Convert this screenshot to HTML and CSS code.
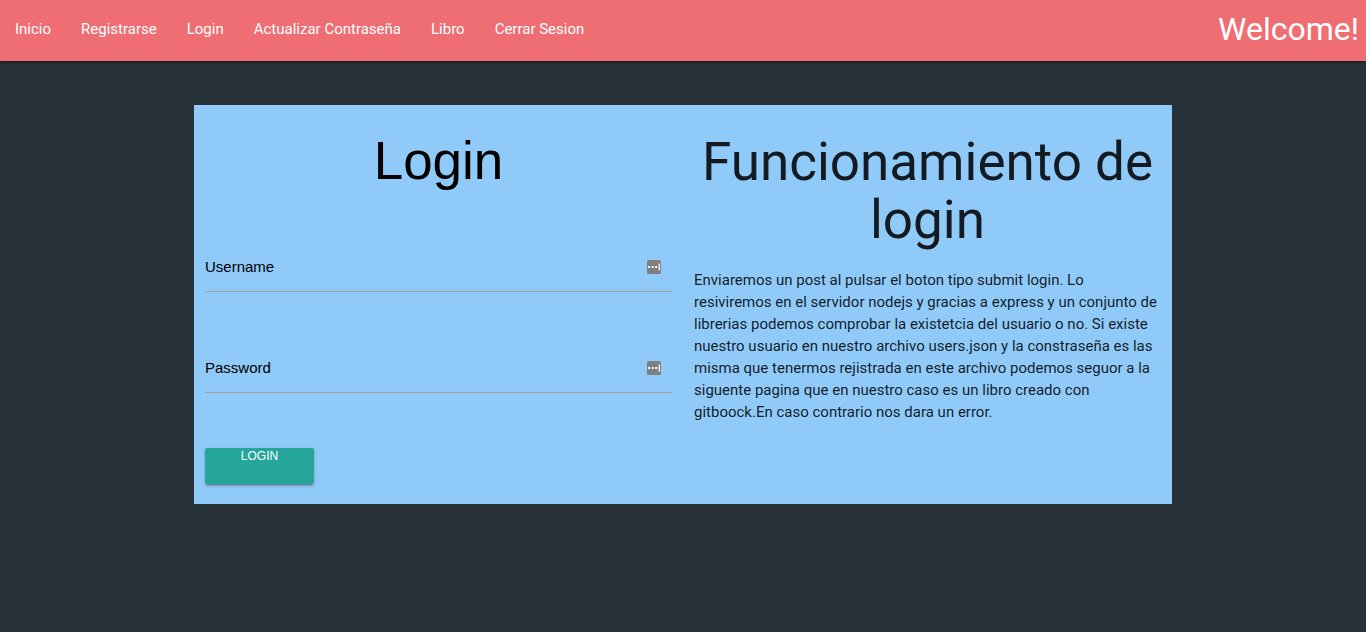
FILE: index.html
```html
<!DOCTYPE html>
<html lang="es">
<head>
<meta charset="utf-8">
<title>Login</title>
<link rel="stylesheet" href="styles.css">
</head>
<body>
<nav class="navbar">
  <ul class="nav-list">
    <li><a href="#">Inicio</a></li>
    <li><a href="#">Registrarse</a></li>
    <li><a href="#">Login</a></li>
    <li><a href="#">Actualizar Contraseña</a></li>
    <li><a href="#">Libro</a></li>
    <li><a href="#">Cerrar Sesion</a></li>
  </ul>
  <a class="brand" href="#">Welcome!</a>
</nav>
<main class="panel">
  <form class="login">
    <h2 class="title title-form">Login</h2>
    <div class="field">
      <input class="field-input" type="text" placeholder="Username" aria-label="Username">
      <svg class="field-icon" viewBox="0 0 14 14" aria-hidden="true"><rect width="14" height="14" rx="1.5" fill="#7f7f7f"/><path fill="#fff" d="M1.2 6.1h1.9v1.8H1.2zM4.7 6.1h1.9v1.8H4.7zM8.2 6.1h1.9v1.8H8.2zM11.6 3.5h1.3v7h-1.3z"/></svg>
    </div>
    <div class="field">
      <input class="field-input" type="password" placeholder="Password" aria-label="Password">
      <svg class="field-icon" viewBox="0 0 14 14" aria-hidden="true"><rect width="14" height="14" rx="1.5" fill="#7f7f7f"/><path fill="#fff" d="M1.2 6.1h1.9v1.8H1.2zM4.7 6.1h1.9v1.8H4.7zM8.2 6.1h1.9v1.8H8.2zM11.6 3.5h1.3v7h-1.3z"/></svg>
    </div>
    <button class="submit" type="button">Login</button>
  </form>
  <section class="info">
    <h2 class="title">Funcionamiento de login</h2>
    <p class="text">Enviaremos un post al pulsar el boton tipo submit login. Lo resiviremos en el servidor nodejs y gracias a express y un conjunto de librerias podemos comprobar la existetcia del usuario o no. Si existe nuestro usuario en nuestro archivo users.json y la constraseña es las misma que tenermos rejistrada en este archivo podemos seguor a la siguente pagina que en nuestro caso es un libro creado con gitboock.En caso contrario nos dara un error.</p>
  </section>
</main>
</body>
</html>
```

FILE: styles.css
```css
* { box-sizing: border-box; }
body {
  margin: 0;
  min-height: 100vh;
  background: #263238;
  color: rgba(0, 0, 0, 0.87);
  font: 15px/22px Roboto, sans-serif;
}
.navbar {
  display: flex;
  justify-content: space-between;
  align-items: center;
  height: 61px;
  padding-bottom: 3px;
  background: #ee6e73;
  box-shadow: 0 2px 2px rgba(0, 0, 0, 0.14), 0 1px 5px rgba(0, 0, 0, 0.12), 0 3px 1px -2px rgba(0, 0, 0, 0.2);
}
.nav-list {
  display: flex;
  margin: 0;
  padding: 0;
  list-style: none;
}
.nav-list a {
  display: block;
  padding: 0 15px;
  color: #fff;
  text-decoration: none;
}
.brand {
  padding-right: 7px;
  color: #fff;
  font-size: 32px;
  text-decoration: none;
}
.panel {
  display: grid;
  grid-template-columns: 1fr 1fr;
  width: 72%;
  max-width: 978px;
  margin: 44px auto 0;
  background: #90caf9;
}
.login, .info { padding: 0 11px; }
.title {
  margin: 28px 0 20px;
  font-size: 53px;
  line-height: 58px;
  font-weight: 400;
  text-align: center;
}
.title-form {
  margin: 27px 0 56px;
  color: #000;
  font-family: "Liberation Sans", sans-serif;
}
.field {
  position: relative;
  margin-bottom: 55px;
}
.field-input {
  display: block;
  width: 100%;
  height: 46px;
  padding: 0 0 4px;
  border: 0;
  border-bottom: 1px solid #9e9e9e;
  background: transparent;
  font: 15px "Liberation Sans", sans-serif;
  outline: 0;
}
.field-input::placeholder { color: #000; opacity: 1; }
.field-icon {
  position: absolute;
  right: 11px;
  top: 14px;
  width: 14px;
  height: 14px;
}
.submit {
  display: block;
  width: 109px;
  height: 36px;
  margin-bottom: 20px;
  padding: 0 0 20px;
  border: 0;
  border-radius: 2px;
  background: #26a69a;
  box-shadow: 0 2px 2px rgba(0, 0, 0, 0.14), 0 1px 5px rgba(0, 0, 0, 0.12), 0 3px 1px -2px rgba(0, 0, 0, 0.2);
  color: #fff;
  font: 500 12px/16px "Liberation Sans", sans-serif;
  text-transform: uppercase;
}
.text { margin: 0; }
```
